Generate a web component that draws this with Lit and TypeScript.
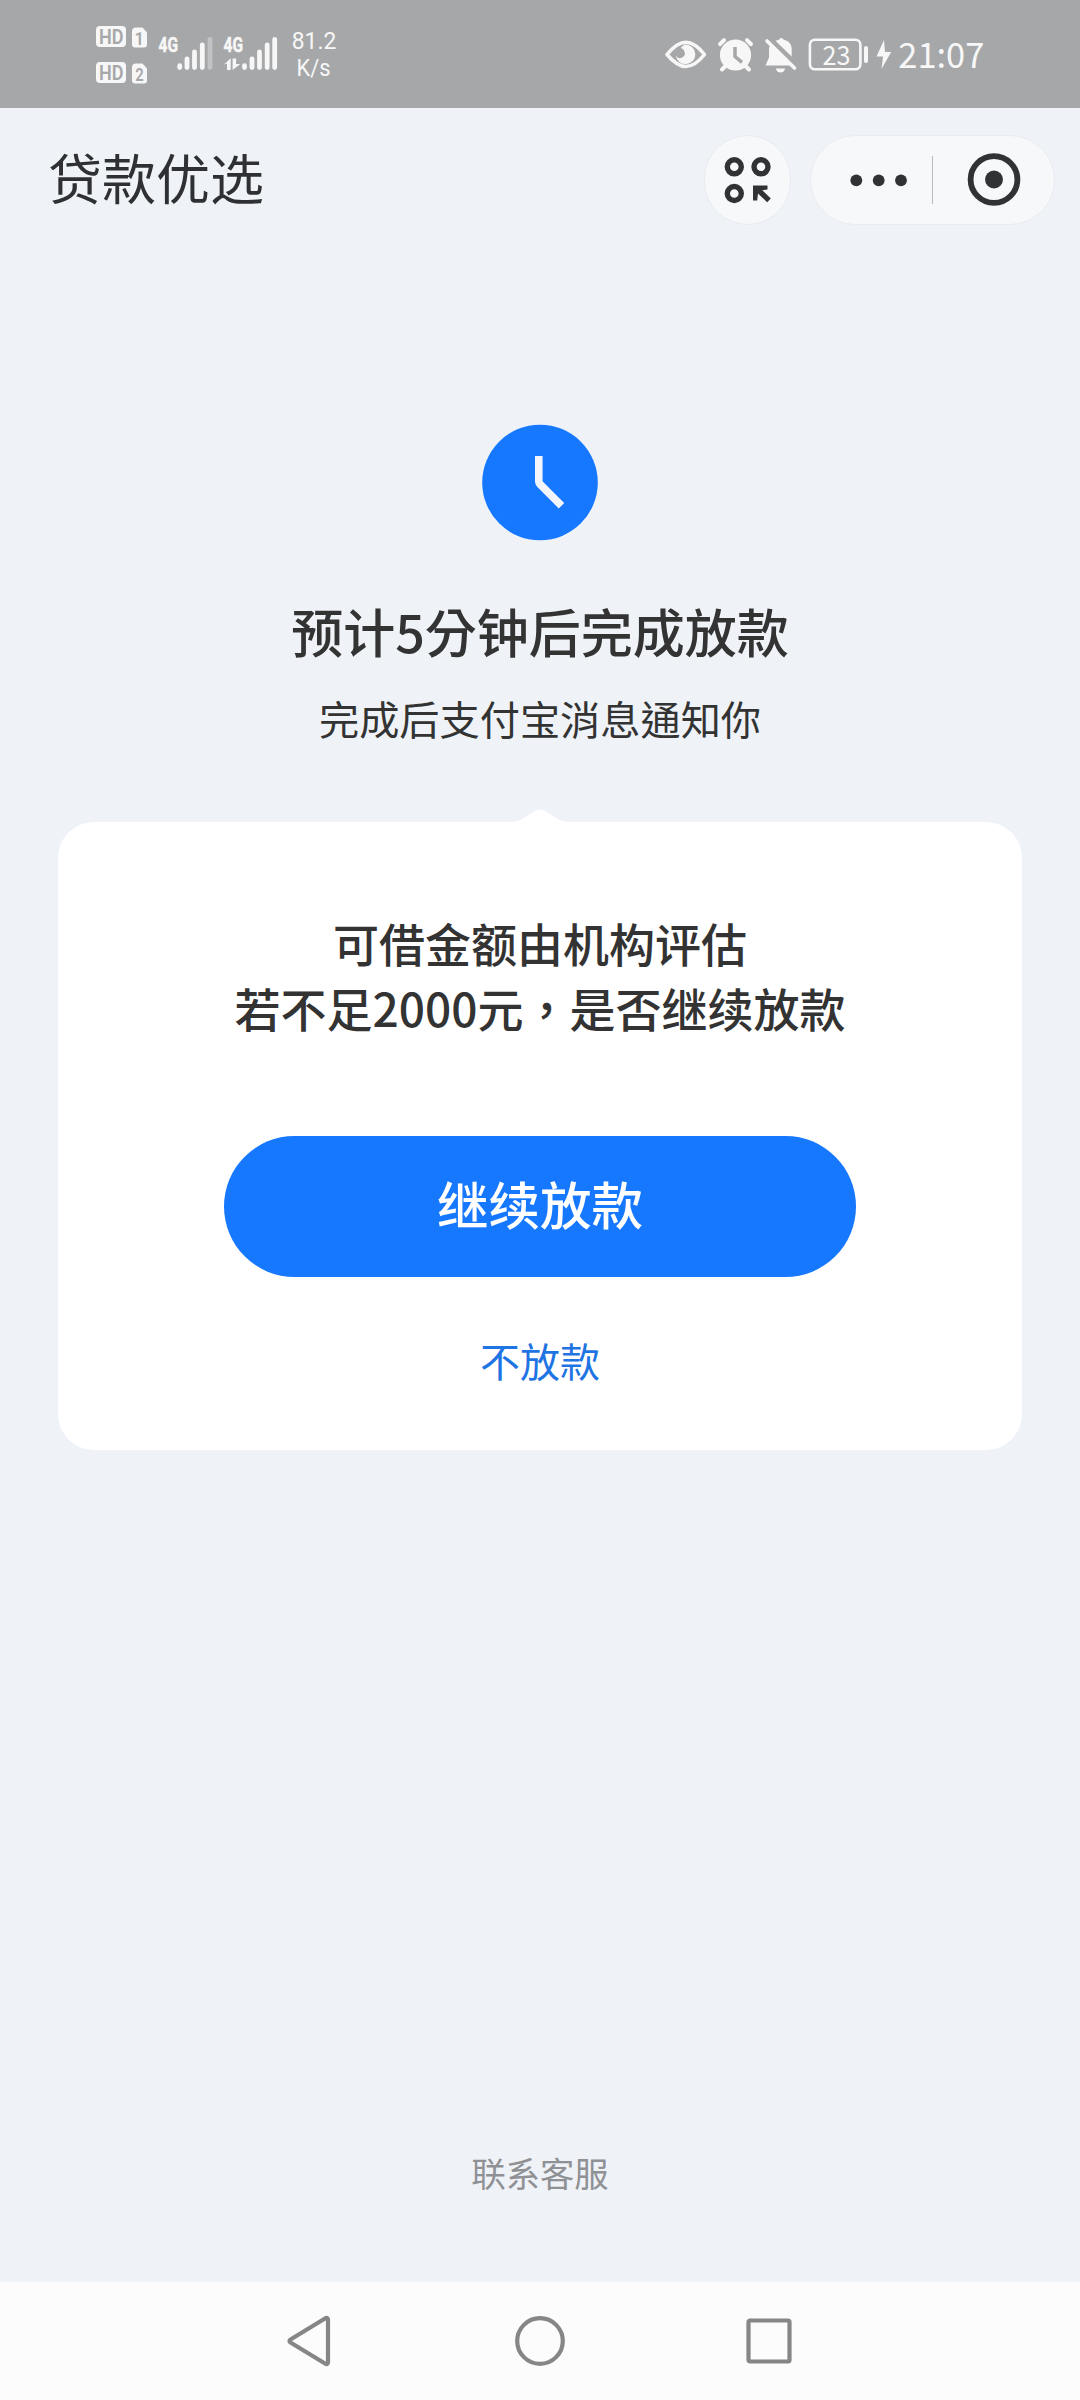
import { LitElement, html, css } from "lit";
import { customElement } from "lit/decorators.js";

@customElement("status-bar")
class StatusBar extends LitElement {
  static styles = css`
    :host { display: block; }
    .bar { height: 108px; background: #a6a7a9; display: flex; justify-content: space-between; padding: 0 80px; box-sizing: border-box; }
    svg { display: block; }
    .net { font-family: Roboto, sans-serif; }
    .time { font-family: "Noto Sans CJK SC", sans-serif; }
  `;
  render() {
    return html`
      <div class="bar">
        <svg width="280" height="108" viewBox="0 0 280 108" fill="#f7f7f7">
          <rect x="16" y="26" width="30" height="21" rx="4" />
          <rect x="16" y="62" width="30" height="21" rx="4" />
          <path d="M56 27.500h6.500l4.500 5v12a3 3 0 0 1-3 3h-9a3 3 0 0 1-3-3v-13a4 4 0 0 1 4-4z" />
          <path d="M56 63.500h6.500l4.500 5v12a3 3 0 0 1-3 3h-9a3 3 0 0 1-3-3v-13a4 4 0 0 1 4-4z" />
          <g class="net" fill="#a6a7a9" font-weight="600" font-size="20">
            <text x="19" y="43.800" textLength="24.500" lengthAdjust="spacingAndGlyphs">HD</text>
            <text x="19" y="79.800" textLength="24.500" lengthAdjust="spacingAndGlyphs">HD</text>
            <text x="59.300" y="44.500" font-size="19" text-anchor="middle" textLength="9.500" lengthAdjust="spacingAndGlyphs">1</text>
            <text x="59.500" y="80.500" font-size="19" text-anchor="middle" textLength="8.500" lengthAdjust="spacingAndGlyphs">2</text>
          </g>
          <g class="net" font-weight="700" font-size="21" stroke="#f7f7f7" stroke-width=".5">
            <text x="78.500" y="52" textLength="19.500" lengthAdjust="spacingAndGlyphs">4G</text>
            <text x="143.500" y="52" textLength="19.500" lengthAdjust="spacingAndGlyphs">4G</text>
          </g>
          <g stroke="#f7f7f7" stroke-width="4.800" stroke-linecap="round">
            <path d="M99.700 65.700v1.800M107 58.800v8.700M114.500 52v15.500M122.300 44.800v22.700" />
            <path d="M130 39.300v28.200" stroke="#c2c3c5" />
            <path d="M164.500 65.700v1.800M172 58.800v8.700M179.500 52v15.500M187.200 44.800v22.700M194.700 39.300v28.200" />
          </g>
          <path d="M144 64.500l6.700-6.200v11.700h-3.700v-6.500zM152.600 58.500h3.500v5.500h4.200l-7.700 6z" />
          <g class="net" font-size="23">
            <text x="211.800" y="49" textLength="44.500" lengthAdjust="spacingAndGlyphs">81.2</text>
            <text x="216.500" y="76" textLength="34" lengthAdjust="spacingAndGlyphs">K/s</text>
          </g>
        </svg>
        <svg width="350" height="108" viewBox="0 0 350 108" fill="#f7f7f7">
          <path d="M17 54.500C25 45 31 42.300 35.800 42.300S47 45 54.500 54.500C47 64 41 66.500 35.800 66.500S25 64 17 54.500z" fill="none" stroke="#f7f7f7" stroke-width="3.600" stroke-linejoin="round" />
          <path d="M35.500 44.500a9.800 9.800 0 1 1-9.700 11a4.800 4.800 0 0 0 8.700-4a4.700 4.700 0 0 0-3.700-3.600a9.800 9.800 0 0 1 4.700-3.400z" />
          <circle cx="85.500" cy="55" r="15.600" />
          <path d="M70 44.200l4-4M101 44.200l-4-4M76 65.500l-4 4M95 65.500l4 4" stroke="#f7f7f7" stroke-width="4" stroke-linecap="round" />
          <path d="M85 47v9.500l7 5.800" stroke="#a6a7a9" stroke-width="3.500" fill="none" />
          <path d="M119 49.500v8l-3.500 8h27.700l-1.500-6v-10c0-6-3-8.500-8-9.800a2.500 2.500 0 0 0-4.700 0c-5 1.200-10 4.800-10 9.800z" />
          <path d="M126 68.500h9a4.500 4 0 0 1-9 0z" />
          <path d="M118.500 37.500l31 30" stroke="#a6a7a9" stroke-width="5" />
          <path d="M117 41l27.500 27" stroke="#f7f7f7" stroke-width="3.600" stroke-linecap="round" />
          <rect x="159.900" y="39.800" width="50.500" height="29.500" rx="5" fill="none" stroke="#f7f7f7" stroke-width="2.600" />
          <rect x="214" y="46" width="4" height="17" rx="2" />
          <path d="M234 40l-7.500 16.500h6.500l-1.500 12.500 9.700-17h-6.200z" />
          <g class="time">
            <text x="172.500" y="64.500" font-size="26" textLength="28" lengthAdjust="spacingAndGlyphs">23</text>
            <text x="248.300" y="68" font-size="35" textLength="86" lengthAdjust="spacingAndGlyphs">21:07</text>
          </g>
        </svg>
      </div>
    `;
  }
}

@customElement("title-bar")
class TitleBar extends LitElement {
  static styles = css`
    :host { display: block; }
    .bar { height: 143px; display: flex; align-items: center; padding: 0 25px 0 48px; gap: 19px; }
    .title { flex: 1; padding-bottom: 6px; font-size: 54px; line-height: 80px; color: #2f3033; }
    .apps, .capsule { box-sizing: border-box; height: 90px; background: #f6f8fa; border: 1px solid #e9ebf0; border-radius: 45px; }
    .apps { width: 87px; }
    .capsule { width: 245px; }
    svg { display: block; margin: -1px; }
  `;
  render() {
    return html`
      <div class="bar">
        <div class="title">贷款优选</div>
        <div class="apps">
          <svg width="87" height="90" viewBox="0 0 87 90" fill="none" stroke="#303234" stroke-width="5.400">
            <circle cx="30.300" cy="31.800" r="7" />
            <circle cx="57" cy="31.800" r="7" />
            <circle cx="30.300" cy="58.500" r="7" />
            <path d="M49 50.500H63.500V54.500L58.300 55.300L66.800 63.500L63.200 67.300L54 58.500L53.200 65.500H49z" fill="#303234" stroke="none" />
          </svg>
        </div>
        <div class="capsule">
          <svg width="245" height="90" viewBox="0 0 245 90" fill="#303234">
            <circle cx="46.300" cy="45.300" r="5.900" />
            <circle cx="68.700" cy="45.300" r="5.900" />
            <circle cx="91" cy="45.300" r="5.900" />
            <rect x="122" y="21" width="1" height="48" fill="#b9bbbd" />
            <circle cx="184" cy="44.500" r="23.400" fill="none" stroke="#303234" stroke-width="5.800" />
            <circle cx="184" cy="44.500" r="9" />
          </svg>
        </div>
      </div>
    `;
  }
}

@customElement("loan-card")
class LoanCard extends LitElement {
  static styles = css`
    :host { display: block; }
    .notch { display: block; margin: 0 auto; }
    .card { box-sizing: border-box; height: 628px; margin: 0 58px; padding-top: 88px; border-radius: 36px; background: #fff; display: flex; flex-direction: column; align-items: center; }
    .question { font-size: 46px; line-height: 65px; font-weight: 500; text-align: center; color: #333; white-space: nowrap; }
    .primary { width: 632px; height: 141px; margin-top: 96px; border: 0; padding: 0 0 9px; border-radius: 71px; background: #1677ff; color: #fff; font: inherit; font-size: 51.500px; font-weight: 500; }
    .secondary { margin-top: 53px; border: 0; padding: 0; background: none; color: #1f74e4; font: inherit; font-size: 40px; line-height: 60px; }
  `;
  render() {
    return html`
      <svg class="notch" width="60" height="13" viewBox="0 0 60 13" fill="#fff">
        <path d="M4 13q4-.5 8-3L26 1.500q4-2 8 0L48 10q4 2.500 8 3z" />
      </svg>
      <div class="card">
        <div class="question">可借金额由机构评估<br />若不足2000元\uff0c是否继续放款</div>
        <button class="primary">继续放款</button>
        <button class="secondary">不放款</button>
      </div>
    `;
  }
}

@customElement("nav-keys")
class NavKeys extends LitElement {
  static styles = css`
    :host { display: block; }
    .bar { height: 118px; background: #fcfcfc; display: flex; justify-content: center; align-items: center; gap: 170px; }
    svg { display: block; fill: none; stroke: #868686; stroke-width: 4.200; stroke-linejoin: round; }
  `;
  render() {
    return html`
      <div class="bar">
        <svg width="60" height="60" viewBox="0 0 60 60"><path d="M48 8.500Q47.500 6 45 7.500L10.500 28.500Q8.500 30 10.500 31.500L45 52.500Q47.500 54 48 51.500z" /></svg>
        <svg width="60" height="60" viewBox="0 0 60 60"><circle cx="30" cy="30" r="22.800" /></svg>
        <svg width="60" height="60" viewBox="0 0 60 60"><rect x="8.500" y="9.500" width="41" height="41" rx="1.500" /></svg>
      </div>
    `;
  }
}

@customElement("app-root")
class AppRoot extends LitElement {
  static styles = css`
    :host { display: flex; flex-direction: column; width: 1080px; height: 2400px; overflow: hidden; background: #eff3f8; color: #333; font-family: "Noto Sans CJK TC", "Noto Sans CJK SC", sans-serif; }
    .hero { display: flex; flex-direction: column; align-items: center; padding-top: 173px; }
    .clock { display: block; }
    .heading { margin-top: 49px; font-size: 52px; line-height: 80px; font-weight: 500; }
    .note { margin-top: 17px; margin-bottom: 61px; font-size: 40.200px; line-height: 60px; }
    .spacer { flex: 1; }
    .service { text-align: center; font-size: 34.300px; line-height: 50px; color: #909195; margin-bottom: 85px; }
  `;
  render() {
    return html`
      <status-bar></status-bar>
      <title-bar></title-bar>
      <div class="hero">
        <svg class="clock" width="118" height="118" viewBox="0 0 118 118">
          <circle cx="59" cy="58.500" r="57.800" fill="#1677ff" />
          <path d="M57.800 32v25.500q0 1.500 1 2.500L80.500 81.800" fill="none" stroke="#f2f6fc" stroke-width="7.600" />
        </svg>
        <div class="heading">预计5分钟后完成放款</div>
        <div class="note">完成后支付宝消息通知你</div>
      </div>
      <loan-card></loan-card>
      <div class="spacer"></div>
      <div class="service">联系客服</div>
      <nav-keys></nav-keys>
    `;
  }
}
